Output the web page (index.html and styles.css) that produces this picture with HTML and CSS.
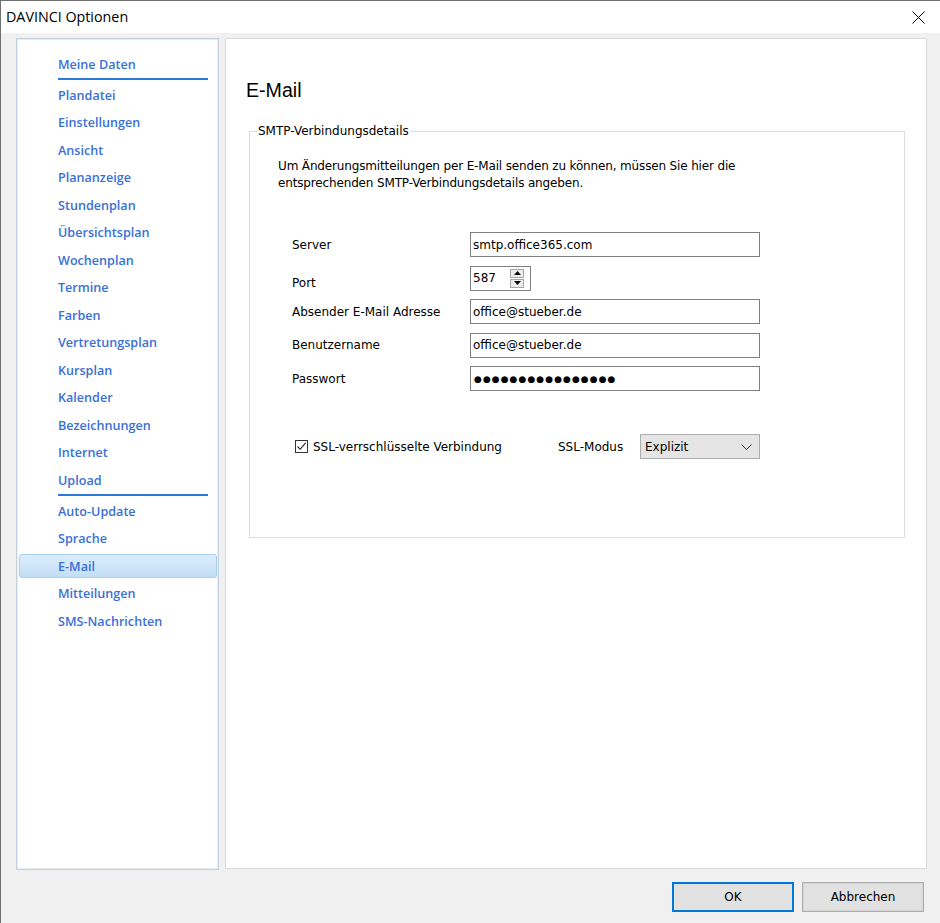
FILE: index.html
```html
<!DOCTYPE html>
<html lang="de">
<head>
<meta charset="utf-8">
<title>DAVINCI Optionen</title>
<link rel="stylesheet" href="styles.css">
</head>
<body>
<div class="window">
  <div class="titlebar">
    <span class="title">DAVINCI Optionen</span>
    <svg class="close" width="13" height="13" viewBox="0 0 13 13"><path d="M0.5 0.5 L12.5 12.5 M12.5 0.5 L0.5 12.5" stroke="#000" stroke-width="1" fill="none"/></svg>
  </div>
  <div class="main">
    <nav class="sidebar">
      <div class="item">Meine Daten</div>
      <div class="sep"></div>
      <div class="item">Plandatei</div>
      <div class="item">Einstellungen</div>
      <div class="item">Ansicht</div>
      <div class="item">Plananzeige</div>
      <div class="item">Stundenplan</div>
      <div class="item">Übersichtsplan</div>
      <div class="item">Wochenplan</div>
      <div class="item">Termine</div>
      <div class="item">Farben</div>
      <div class="item">Vertretungsplan</div>
      <div class="item">Kursplan</div>
      <div class="item">Kalender</div>
      <div class="item">Bezeichnungen</div>
      <div class="item">Internet</div>
      <div class="item">Upload</div>
      <div class="sep"></div>
      <div class="item">Auto-Update</div>
      <div class="item">Sprache</div>
      <div class="item selected">E-Mail</div>
      <div class="item">Mitteilungen</div>
      <div class="item">SMS-Nachrichten</div>
    </nav>
    <section class="content">
      <h1 class="heading">E-Mail</h1>
      <fieldset class="group">
        <legend class="legend">SMTP-Verbindungsdetails</legend>
        <div class="group-body">
          <p class="desc">Um Änderungsmitteilungen per E-Mail senden zu können, müssen Sie hier die<br>entsprechenden SMTP-Verbindungsdetails angeben.</p>
          <div class="form">
            <div class="label">Server</div>
            <div class="field wide">smtp.office365.com</div>
            <div class="label port-label">Port</div>
            <div class="field port"><span>587</span>
              <span class="spin">
                <span class="spin-btn"><svg width="7" height="4" viewBox="0 0 7 4"><path d="M3.5 0 L7 4 L0 4 Z" fill="#000"/></svg></span>
                <span class="spin-btn"><svg width="7" height="4" viewBox="0 0 7 4"><path d="M0 0 L7 0 L3.5 4 Z" fill="#000"/></svg></span>
              </span>
            </div>
            <div class="label">Absender E-Mail Adresse</div>
            <div class="field wide">office@stueber.de</div>
            <div class="label">Benutzername</div>
            <div class="field wide">office@stueber.de</div>
            <div class="label">Passwort</div>
            <div class="field wide"><span class="dots">●●●●●●●●●●●●●●●●</span></div>
          </div>
          <div class="ssl-row">
            <div class="check-wrap">
              <span class="checkbox"><svg width="11" height="11" viewBox="0 0 11 11"><path d="M1.5 5.5 L4.2 8.3 L9.6 1.8" stroke="#222" stroke-width="1.1" fill="none"/></svg></span>
              <span class="check-label">SSL-verrschlüsselte Verbindung</span>
            </div>
            <span class="mode-label">SSL-Modus</span>
            <div class="select"><span>Explizit</span><svg width="11" height="6" viewBox="0 0 11 6"><path d="M0.5 0.5 L5.5 5.5 L10.5 0.5" stroke="#333" stroke-width="1" fill="none"/></svg></div>
          </div>
        </div>
      </fieldset>
    </section>
  </div>
  <div class="footer">
    <button class="btn default">OK</button>
    <button class="btn">Abbrechen</button>
  </div>
</div>
</body>
</html>
```
FILE: styles.css
```css
html, body {
  margin: 0;
  padding: 0;
}
body {
  width: 940px;
  height: 923px;
  overflow: hidden;
  background: #f0f0f0;
  font-family: "DejaVu Sans", sans-serif;
  font-size: 12px;
  color: #000;
}
.window {
  width: 940px;
  height: 923px;
  box-sizing: border-box;
  border-left: 1px solid #707070;
  border-top: 1px solid #707070;
  display: flex;
  flex-direction: column;
}
.titlebar {
  height: 32px;
  background: #fff;
  display: flex;
  align-items: center;
  justify-content: space-between;
  padding: 0 15px 0 5px;
  flex-shrink: 0;
}
.title {
  font-family: "Open Sans", sans-serif;
  font-size: 14.3px;
  color: #000;
  margin-top: -1px;
}
.close {
  display: block;
  margin-top: 1px;
}
.main {
  display: flex;
  gap: 6px;
  padding: 5px 0 0 15px;
  height: 832px;
  flex-shrink: 0;
}
.sidebar {
  width: 203px;
  height: 832px;
  box-sizing: border-box;
  background: #fff;
  border: 1px solid #c3d1de;
  box-shadow: inset 0 0 0 1px #e6ecf2;
  padding: 13px 1px 0 2px;
  display: flex;
  flex-direction: column;
  gap: 3.5px;
}
.item {
  height: 24px;
  box-sizing: border-box;
  padding-left: 38px;
  display: flex;
  align-items: center;
  font-family: "Open Sans", sans-serif;
  font-weight: 600;
  font-size: 12.6px;
  color: #3a70d8;
  border: 1px solid transparent;
  border-radius: 3px;
}
.item.selected {
  background: linear-gradient(#dcedfb, #c2def4);
  border-color: #a8cfee;
}
.sep {
  height: 2px;
  width: 150px;
  margin: -1.5px 0 -0.5px 39px;
  background: #2b7ad9;
}
.content {
  width: 702px;
  height: 831px;
  box-sizing: border-box;
  background: #fff;
  border: 1px solid #dadada;
  padding: 0 21px 0 20px;
}
.heading {
  margin: 40px 0 0 0;
  font-family: "Liberation Sans", Arial, sans-serif;
  font-size: 19.6px;
  line-height: 22px;
  font-weight: normal;
  color: #000;
}
.group {
  margin: 23px 0 0 3px;
  border: 1px solid #dcdcdc;
  padding: 0 8px 78px 8px;
}
.legend {
  padding: 0 1px 0 0;
  font-size: 12px;
  line-height: 14px;
  color: #000;
}
.group-body {
  padding-left: 20px;
}
.desc {
  margin: 20px 0 0 0;
  line-height: 17px;
  letter-spacing: -0.15px;
}
.form {
  margin-top: 40px;
  padding-left: 14px;
  display: grid;
  grid-template-columns: 178px 290px;
  row-gap: 8.5px;
  align-items: center;
}
.label {
  line-height: 14px;
}
.port-label {
  padding-top: 10px;
}
.field {
  height: 25px;
  box-sizing: border-box;
  border: 1px solid #7f7f7f;
  background: #fff;
  display: flex;
  align-items: center;
  padding-left: 2px;
}
.field.port {
  width: 61px;
  justify-content: space-between;
  padding-right: 6px;
}
.spin {
  display: flex;
  flex-direction: column;
  gap: 1px;
}
.spin-btn {
  width: 14px;
  height: 9px;
  box-sizing: border-box;
  border: 1px solid #a6a6a6;
  background: #ececec;
  display: flex;
  align-items: center;
  justify-content: center;
}
.spin-btn svg {
  display: block;
}
.dots {
  font-size: 9px;
  letter-spacing: 1.05px;
  padding-left: 1px;
}
.ssl-row {
  margin-top: 43px;
  padding-left: 17px;
  display: flex;
  align-items: center;
}
.check-wrap {
  width: 263px;
  display: flex;
  align-items: center;
  gap: 5px;
}
.checkbox {
  width: 13px;
  height: 13px;
  box-sizing: border-box;
  border: 1px solid #333;
  background: #fff;
  display: flex;
  align-items: center;
  justify-content: center;
}
.checkbox svg {
  display: block;
}
.mode-label {
  width: 82px;
}
.select {
  width: 120px;
  height: 25px;
  box-sizing: border-box;
  border: 1px solid #adadad;
  background: #e5e5e5;
  display: flex;
  align-items: center;
  justify-content: space-between;
  padding: 0 7px 0 4px;
}
.select svg {
  display: block;
}
.footer {
  display: flex;
  justify-content: flex-end;
  gap: 8px;
  padding: 12px 16px 0 0;
}
.btn {
  width: 122px;
  height: 30px;
  box-sizing: border-box;
  background: #e1e1e1;
  border: 1px solid #adadad;
  box-shadow: inset 0 0 0 1px #d4d4d4;
  font-family: "DejaVu Sans", sans-serif;
  font-size: 12px;
  color: #000;
  padding: 0;
  margin: 0;
}
.btn.default {
  border: 2px solid #0078d7;
  box-shadow: none;
}
```
